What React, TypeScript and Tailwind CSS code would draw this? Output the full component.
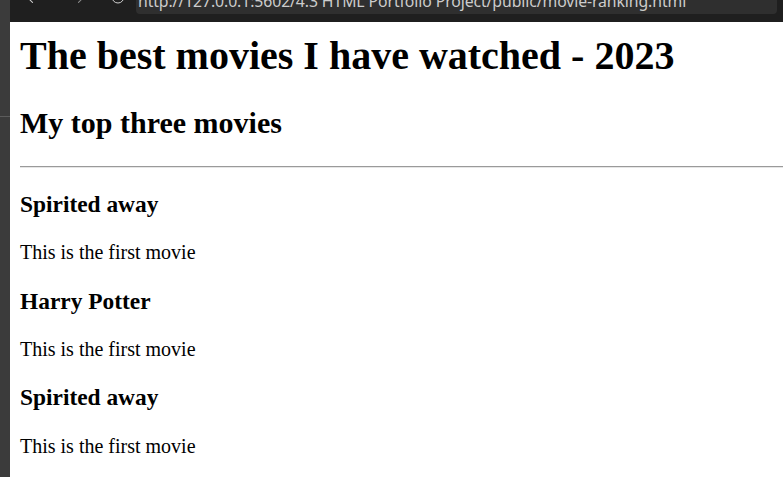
import { ArrowLeft, ArrowRight, RotateCw } from "lucide-react";

const movies = [
  { title: "Spirited away", note: "This is the first movie" },
  { title: "Harry Potter", note: "This is the first movie" },
  { title: "Spirited away", note: "This is the first movie" },
];

const App = () => {
  return (
    <div className="flex h-[477px] w-[783px] overflow-hidden bg-white">
      {/* side strip */}
      <div className="flex w-[10px] shrink-0 flex-col bg-[#3b3b3b]">
        <div className="h-[116px]" />
        <div className="h-px bg-[#5c5c5c]" />
      </div>

      <div className="flex min-w-0 flex-1 flex-col">
        {/* browser bar, scrolled mostly out of view */}
        <div className="h-[22px] shrink-0 overflow-hidden bg-[#1f1f1f]">
          <div className="-mt-[14px] flex h-[28px] items-center">
            <div className="ml-[7px] flex w-[30px] justify-center text-[#cfcfcf]">
              <ArrowLeft size={17} strokeWidth={1.5} className="-mt-[6px]" />
            </div>
            <div className="ml-[16px] flex w-[30px] justify-center text-[#8a8a8a]">
              <ArrowRight size={17} strokeWidth={1.5} className="-mt-[6px]" />
            </div>
            <div className="ml-[10px] flex w-[30px] justify-center text-[#cfcfcf]">
              <RotateCw size={16} strokeWidth={1.5} className="-mt-[6px]" />
            </div>
            <div className="ml-[3px] mr-[6px] flex h-[28px] flex-1 items-center overflow-hidden rounded-[4px] bg-[#2f2f2f] pl-[2px] pt-[4px]">
              <span className="whitespace-nowrap font-['Noto_Sans',sans-serif] text-[15.8px] tracking-[-0.1px] text-[#cccccc]">
                http://127.0.0.1:5602/4.3 HTML Portfolio Project/public/movie-ranking.html
              </span>
            </div>
          </div>
        </div>

        {/* page */}
        <div className="flex-1 overflow-hidden pl-[10px] font-['Liberation_Serif','Times_New_Roman',serif] text-black">
          <h1 className="mt-[11px] whitespace-nowrap text-[40px] font-bold leading-[46px]">
            The best movies I have watched - 2023
          </h1>
          <h2 className="mt-[27px] text-[30px] font-bold leading-[34.5px]">My top three movies</h2>
          <hr className="mt-[25px] border-t border-b border-t-[#9a9a9a] border-b-[#e6e6e6]" />
          {movies.map((m, i) => (
            <div key={i}>
              <h3 className="mt-[23.4px] text-[23.4px] font-bold leading-[27px]">{m.title}</h3>
              <p className="mt-[23.4px] text-[20px] leading-[23px]">{m.note}</p>
            </div>
          ))}
        </div>
      </div>
    </div>
  );
};

export default App;
